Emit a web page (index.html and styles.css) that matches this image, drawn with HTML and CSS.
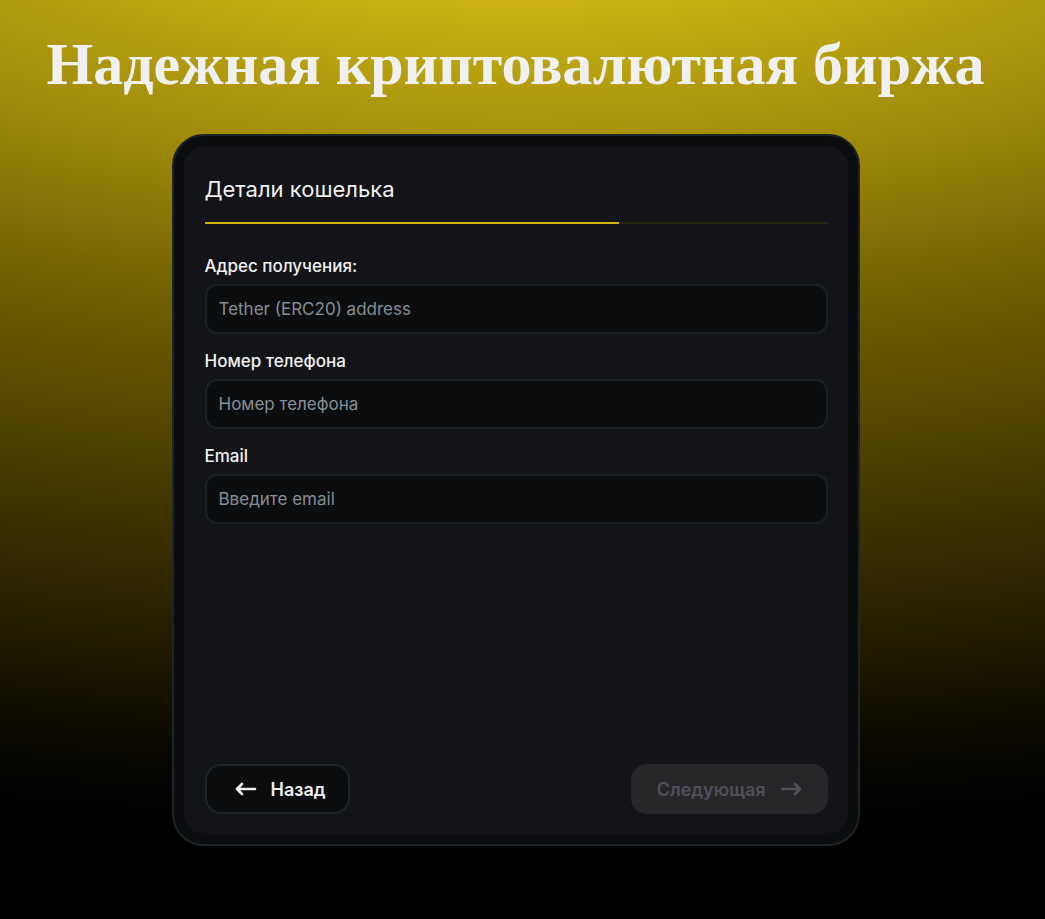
FILE: index.html
```
<!DOCTYPE html>
<html lang="ru">
<head>
<meta charset="UTF-8">
<meta name="viewport" content="width=device-width, initial-scale=1.0">
<title>Надежная криптовалютная биржа</title>
<link rel="stylesheet" href="styles.css">
</head>
<body>

<main class="page">
  <h1 class="page-title">Надежная криптовалютная биржа</h1>

  <div class="card">
    <form class="panel">
      <h2 class="panel-title">Детали кошелька</h2>
      <div class="progress"><div class="progress-bar"></div></div>

      <div class="field">
        <label for="address">Адрес получения:</label>
        <input type="text" id="address" placeholder="Tether (ERC20) address">
      </div>
      <div class="field">
        <label for="phone">Номер телефона</label>
        <input type="tel" id="phone" placeholder="Номер телефона">
      </div>
      <div class="field">
        <label for="email">Email</label>
        <input type="email" id="email" placeholder="Введите email">
      </div>

      <div class="actions">
        <button type="button" class="btn btn-back">
          <svg class="arrow" viewBox="0 0 22 14" aria-hidden="true"><path d="M20 7H2M7 2L2 7l5 5"/></svg>
          Назад
        </button>
        <button type="submit" class="btn btn-next" disabled>
          Следующая
          <svg class="arrow" viewBox="0 0 22 14" aria-hidden="true"><path d="M2 7h18M15 2l5 5-5 5"/></svg>
        </button>
      </div>
    </form>
  </div>
</main>

</body>
</html>
```
FILE: styles.css
```
* {
  box-sizing: border-box;
}
body {
  margin: 0;
  min-height: 100vh;
  font-family: Inter, sans-serif;
  color: #f0f0f0;
  background: #000 radial-gradient(240% 110% at 50% -20%, #cbb413 18%, #b09a0e 28%, #9c870a 36%, #776704 47%, #5f5000 57%, #443a00 68%, #302700 77%, #191400 87%, #060500 95%, #000 100%) no-repeat;
}
.page {
  display: flex;
  flex-direction: column;
  align-items: center;
  padding: 28px 14px 72px 0;
}
.page-title {
  margin: 0 0 34px;
  font-family: "Liberation Serif", serif;
  font-size: 60px;
  line-height: 72px;
  font-weight: bold;
  text-align: center;
}
.card {
  display: flex;
  width: 100%;
  max-width: 688px;
  min-height: 712px;
  padding: 10px;
  background: #0b0d0e;
  border: 2px solid #1c2428;
  border-radius: 32px;
}
.panel {
  flex: 1;
  display: flex;
  flex-direction: column;
  padding: 26px 20px 20px 21px;
  background: #131417;
  border-radius: 20px;
}
.panel-title {
  margin: 0 0 16px;
  font-size: 22px;
  line-height: 34px;
  font-weight: 400;
}
.progress {
  height: 2px;
  margin-bottom: 32px;
  background: #29260f;
}
.progress-bar {
  width: 66.6%;
  height: 100%;
  background: #d2b60f;
}
.field {
  display: flex;
  flex-direction: column;
  gap: 7px;
  margin-bottom: 17px;
}
.field label {
  font-size: 17px;
  line-height: 21px;
  font-weight: 500;
}
.field input {
  height: 50px;
  padding: 0 12px;
  font-family: inherit;
  font-size: 17px;
  color: #f0f0f0;
  background: #0b0d0e;
  border: 2px solid #19202a;
  border-radius: 12px;
}
.field input::placeholder {
  color: #868d96;
  opacity: 1;
}
.actions {
  display: flex;
  justify-content: space-between;
  margin-top: auto;
}
.btn {
  display: flex;
  align-items: center;
  gap: 14px;
  height: 50px;
  padding: 0 24px;
  font-family: inherit;
  font-size: 18px;
  font-weight: 600;
  border: 2px solid transparent;
  border-radius: 16px;
  cursor: pointer;
}
.btn-back {
  padding: 0 22px 0 28px;
  color: #f0f0f0;
  background: #0b0d0e;
  border-color: #1c2628;
}
.btn-next {
  color: #50505a;
  background: #27272a;
}
.btn:disabled {
  cursor: default;
}
.arrow {
  width: 22px;
  height: 14px;
  fill: none;
  stroke: currentColor;
  stroke-width: 2.6;
  stroke-linecap: round;
  stroke-linejoin: round;
}
```
